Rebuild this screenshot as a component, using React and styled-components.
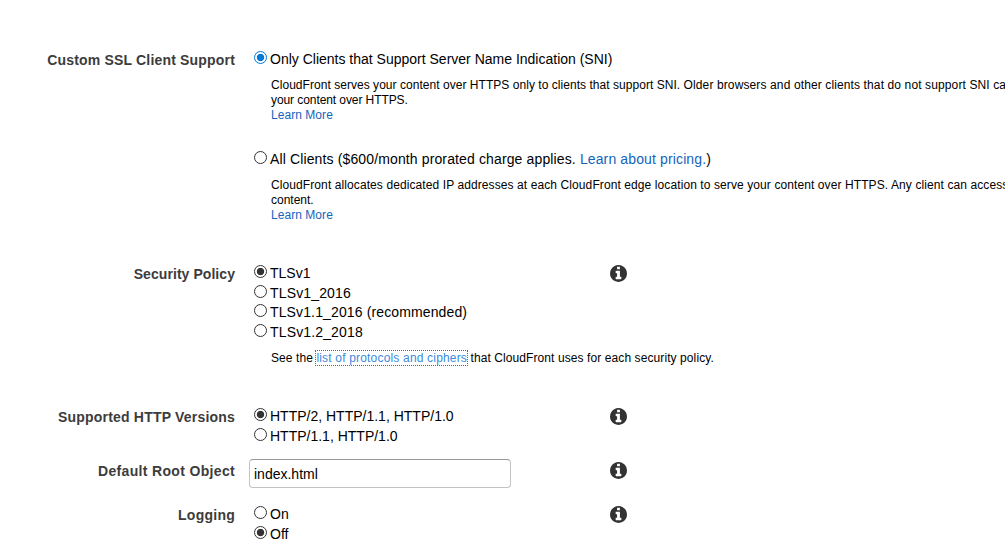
import React from 'react';
import styled, { createGlobalStyle } from 'styled-components';

const GlobalStyle = createGlobalStyle`
  body {
    margin: 0;
    background: #fff;
    overflow: hidden;
  }
`;

const Page = styled.form`
  box-sizing: border-box;
  height: 553px;
  padding-top: 49px;
  overflow: hidden;
  font-family: 'Liberation Sans', Arial, sans-serif;
  font-size: 14px;
  color: #000;
`;

const Row = styled.div`
  display: flex;
  align-items: flex-start;
  height: ${(props) => props.$height}px;
`;

const Label = styled.label`
  flex: none;
  width: 235px;
  padding-top: ${(props) => props.$top || 1}px;
  line-height: 20px;
  font-weight: bold;
  text-align: right;
  white-space: nowrap;
  letter-spacing: ${(props) => props.$tracking || 0}px;
  color: #3c3c3c;
`;

const Field = styled.div`
  flex: none;
  width: 360px;
  padding-left: 14px;
  white-space: nowrap;
`;

const Option = styled.label`
  display: flex;
  align-items: flex-start;
  height: 19.6px;
  padding-left: 5px;
  line-height: 20px;
  letter-spacing: ${(props) => props.$tracking || 0}px;
`;

const Radio = styled.input.attrs({ type: 'radio' })`
  appearance: none;
  flex: none;
  box-sizing: border-box;
  width: 13px;
  height: 13px;
  margin: 2px 3px 0 0;
  border: 1px solid ${(props) => (props.$active ? '#0078d7' : '#333')};
  border-radius: 50%;
  background: #fff;

  &:checked {
    background: radial-gradient(
      circle,
      ${(props) => (props.$active ? '#0078d7' : '#333')} 3.3px,
      #fff 4.1px
    );
  }
`;

const Help = styled.div`
  padding: 9.4px 0 ${(props) => props.$bottom || 0}px 22px;
  font-size: 12px;
  line-height: 15px;
`;

const Line = styled.div`
  letter-spacing: ${(props) => props.$tracking || 0}px;
`;

const Spaced = styled.span`
  letter-spacing: ${(props) => props.$tracking}px;
`;

const Link = styled.a`
  color: #1464bd;
  text-decoration: none;
`;

const FocusedLink = styled(Link)`
  letter-spacing: 0.18px;
  color: #3b8ade;
  outline: 1px dotted #1a73d0;
`;

const TextInput = styled.input`
  display: block;
  box-sizing: border-box;
  width: 262px;
  height: 29px;
  padding: 1px 4px;
  border: 1px solid #c3c3c3;
  border-top-color: #999;
  border-radius: 4px;
  font: inherit;
  color: #000;
`;

const InfoIcon = styled.svg`
  flex: none;
  width: 17px;
  height: 17px;
  margin-top: ${(props) => props.$top || 2}px;
  margin-left: 1px;
  fill: #333;
`;

const Info = ({ top }) => (
  <InfoIcon $top={top} viewBox="128 128 1536 1536">
    <path d="M1152 1376v-160q0-14-9-23t-23-9h-96V672q0-14-9-23t-23-9H672q-14 0-23 9t-9 23v160q0 14 9 23t23 9h96v320h-96q-14 0-23 9t-9 23v160q0 14 9 23t23 9h448q14 0 23-9t9-23zM1024 480V320q0-14-9-23t-23-9H800q-14 0-23 9t-9 23v160q0 14 9 23t23 9h192q14 0 23-9t9-23zM1664 896q0 209-103 385.5T1281.500 1561 896 1664t-385.500-103T231 1281.500 128 896t103-385.500T510.500 231 896 128t385.500 103T1561 510.500 1664 896z" />
  </InfoIcon>
);

const App = () => {
  return (
    <Page>
      <GlobalStyle />
      <Row $height={214}>
        <Label $tracking={0.18}>Custom SSL Client Support</Label>
        <Field>
          <Option>
            <Radio name="ssl" $active defaultChecked />
            <span>Only Clients that Support Server Name Indication (SNI)</span>
          </Option>
          <Help $bottom={26}>
            <Line $tracking={0.04}>
              CloudFront serves your content over HTTPS only to clients that support SNI.{' '}
              <Spaced $tracking={0.12}>
                Older browsers and other clients that do not support SNI can't access
              </Spaced>
            </Line>
            <Line $tracking={-0.08}>your content over HTTPS.</Line>
            <Line $tracking={0.05}>
              <Link>Learn More</Link>
            </Line>
          </Help>
          <Option $tracking={0.13}>
            <Radio name="ssl" />
            <span>
              All Clients ($600/month prorated charge applies. <Link>Learn about pricing.</Link>)
            </span>
          </Option>
          <Help>
            <Line $tracking={0.095}>
              CloudFront allocates dedicated IP addresses at each CloudFront edge location to serve
              your content over HTTPS. Any client can access your
            </Line>
            <Line>content.</Line>
            <Line $tracking={0.05}>
              <Link>Learn More</Link>
            </Line>
          </Help>
        </Field>
      </Row>
      <Row $height={143}>
        <Label $tracking={0.06}>Security Policy</Label>
        <Field>
          <Option>
            <Radio name="policy" defaultChecked />
            <span>TLSv1</span>
          </Option>
          <Option $tracking={0.15}>
            <Radio name="policy" />
            <span>TLSv1_2016</span>
          </Option>
          <Option $tracking={0.13}>
            <Radio name="policy" />
            <span>TLSv1.1_2016 (recommended)</span>
          </Option>
          <Option $tracking={0.15}>
            <Radio name="policy" />
            <span>TLSv1.2_2018</span>
          </Option>
          <Help>
            <Line $tracking={0.09}>
              See the <FocusedLink>list of protocols and ciphers</FocusedLink> that CloudFront uses
              for each security policy.
            </Line>
          </Help>
        </Field>
        <Info />
      </Row>
      <Row $height={53}>
        <Label $tracking={0.2}>Supported HTTP Versions</Label>
        <Field>
          <Option>
            <Radio name="http" defaultChecked />
            <span>HTTP/2, HTTP/1.1, HTTP/1.0</span>
          </Option>
          <Option>
            <Radio name="http" />
            <span>HTTP/1.1, HTTP/1.0</span>
          </Option>
        </Field>
        <Info />
      </Row>
      <Row $height={45}>
        <Label $top={2} $tracking={0.33}>
          Default Root Object
        </Label>
        <Field>
          <TextInput type="text" defaultValue="index.html" />
        </Field>
        <Info top={3} />
      </Row>
      <Row $height={49}>
        <Label $tracking={0.25}>Logging</Label>
        <Field>
          <Option>
            <Radio name="logging" />
            <span>On</span>
          </Option>
          <Option>
            <Radio name="logging" defaultChecked />
            <span>Off</span>
          </Option>
        </Field>
        <Info />
      </Row>
    </Page>
  );
};

export default App;
